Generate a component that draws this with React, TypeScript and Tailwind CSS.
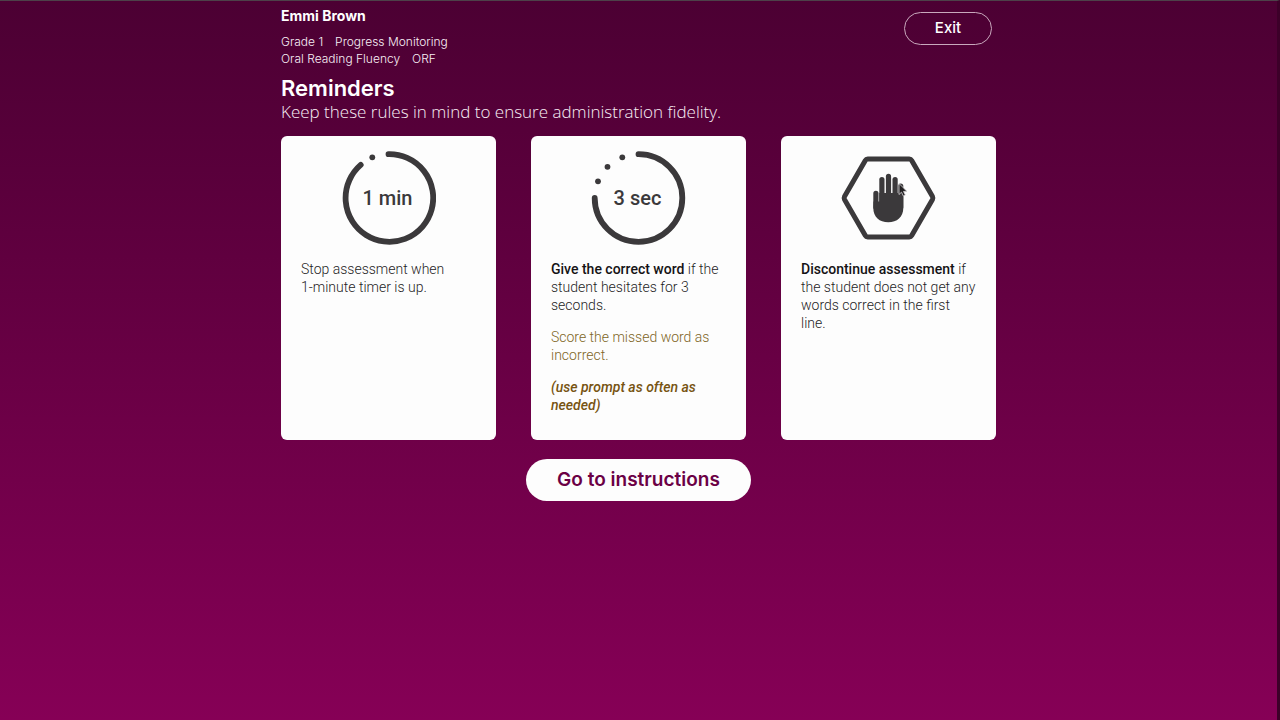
import React from 'react';

interface TimerIconProps {
  label: string;
  arc: string;
  dots: number[][];
}

const TimerIcon: React.FC<TimerIconProps> = ({ label, arc, dots }) => (
  <svg width="95" height="94" viewBox="-0.5 0 95 94" fill="none" className="mx-auto block">
    <path d={arc} stroke="#3b393b" strokeWidth="5.8" strokeLinecap="round" />
    {dots.map(([cx, cy]) => (
      <circle key={`${cx}-${cy}`} cx={cx} cy={cy} r="2.9" fill="#3b393b" />
    ))}
    <text
      x="46"
      y="54"
      textAnchor="middle"
      fill="#3b393b"
      className="font-['Roboto',sans-serif] text-[20px] font-medium"
    >
      {label}
    </text>
  </svg>
);

const StopIcon: React.FC = () => (
  <svg width="95" height="94" viewBox="-0.5 0 95 94" fill="none" className="mx-auto block">
    <path
      d="M26.2 8H67.8Q69.4 8 70.2 9.4L91 45.6Q91.7 47 91 48.4L70.2 84.6Q69.4 86 67.8 86H26.2Q24.6 86 23.8 84.6L3 48.4Q2.3 47 3 45.6L23.8 9.4Q24.6 8 26.2 8Z"
      stroke="#3b393b"
      strokeWidth="5"
      strokeLinejoin="round"
    />
    {/* fingers */}
    <g stroke="#3b393b" strokeWidth="5.2" strokeLinecap="round">
      <path d="M34.4 42.4V56" />
      <path d="M40.4 28.6V56" />
      <path d="M47 25.4V56" />
      <path d="M53.6 28.6V56" />
      <path d="M59.2 35V56" />
    </g>
    <path
      d="M32 50.5H37.8V42H61.8V57C61.8 66 55.5 71.3 46.8 71.3C38 71.3 31.8 66 31.8 57Z"
      fill="#3b393b"
    />
    {/* pointer */}
    <path
      d="M57.5 32.5V43.5L60 41.2L61.8 45L63.8 44L62 40.4H65.5Z"
      fill="#222022"
      stroke="#d8d6d8"
      strokeWidth="0.8"
    />
  </svg>
);

interface ReminderCardProps {
  icon: React.ReactNode;
  children: React.ReactNode;
}

const ReminderCard: React.FC<ReminderCardProps> = ({ icon, children }) => (
  <li className="min-h-[304px] rounded-md bg-[#fdfdfd] px-5 py-[15px] text-[#1f1d1f]">
    {icon}
    <div className="mt-[15px] space-y-[14px] font-['Roboto',sans-serif] text-[14px] leading-[18px] font-light">
      {children}
    </div>
  </li>
);

export default function App() {
  return (
    <div className="min-h-screen border-t-1 border-r-3 border-t-[#4d4149] border-r-[#3d0029] bg-linear-to-b from-[#4c0033] to-[#860056] font-['Inter',sans-serif] text-[#f8eff5]">
      <div className="mx-auto max-w-[715px]">
        <header className="flex items-start justify-between pt-[5px]">
          <div>
            <p className="text-[14px] leading-5 font-bold text-white">Emmi Brown</p>
            <dl className="mt-[7px] text-[12px] leading-[17px] font-light">
              <div className="flex gap-3">
                <dt>Grade 1</dt>
                <dd>Progress Monitoring</dd>
              </div>
              <div className="flex gap-3">
                <dt>Oral Reading Fluency</dt>
                <dd>ORF</dd>
              </div>
            </dl>
          </div>
          <button
            type="button"
            className="mt-[6px] mr-1 h-[33px] w-[88px] rounded-full border border-[#c9a9bd] text-[15px] font-medium text-white"
          >
            Exit
          </button>
        </header>

        <main>
          <h1 className="mt-2 text-[22px] leading-[26px] font-semibold text-white">Reminders</h1>
          <p className="font-['Open_Sans',sans-serif] text-[17px] leading-[22px] font-light">
            Keep these rules in mind to ensure administration fidelity.
          </p>

          <ul className="mt-[13px] grid grid-cols-3 gap-[35px]">
            <ReminderCard
              icon={
                <TimerIcon
                  label="1 min"
                  arc="M47 3.2A43.8 43.8 0 1 1 19.2 13.9"
                  dots={[[30.8, 6.3]]}
                />
              }
            >
              <p>
                Stop assessment when
                <br />
                1-minute timer is up.
              </p>
            </ReminderCard>
            <ReminderCard
              icon={
                <TimerIcon
                  label="3 sec"
                  arc="M47 3.2A43.8 43.8 0 1 1 3.2 47"
                  dots={[[30.8, 6.3], [16, 15.8], [6.5, 30.3]]}
                />
              }
            >
              <p>
                <strong className="font-medium text-[#151315]">Give the correct word</strong> if the student hesitates for 3 seconds.
              </p>
              <p className="text-[#80661f]">Score the missed word as incorrect.</p>
              <p className="font-medium text-[#775412] italic">(use prompt as often as needed)</p>
            </ReminderCard>
            <ReminderCard icon={<StopIcon />}>
              <p>
                <strong className="font-medium text-[#151315]">Discontinue assessment</strong> if the student does not get any words correct in the first line.
              </p>
            </ReminderCard>
          </ul>

          <div className="mt-[19px] flex justify-center">
            <button
              type="button"
              className="h-[42px] w-[225px] rounded-full bg-[#fdfdfd] text-[19px] font-semibold text-[#6b0045]"
            >
              Go to instructions
            </button>
          </div>
        </main>
      </div>
    </div>
  );
}
